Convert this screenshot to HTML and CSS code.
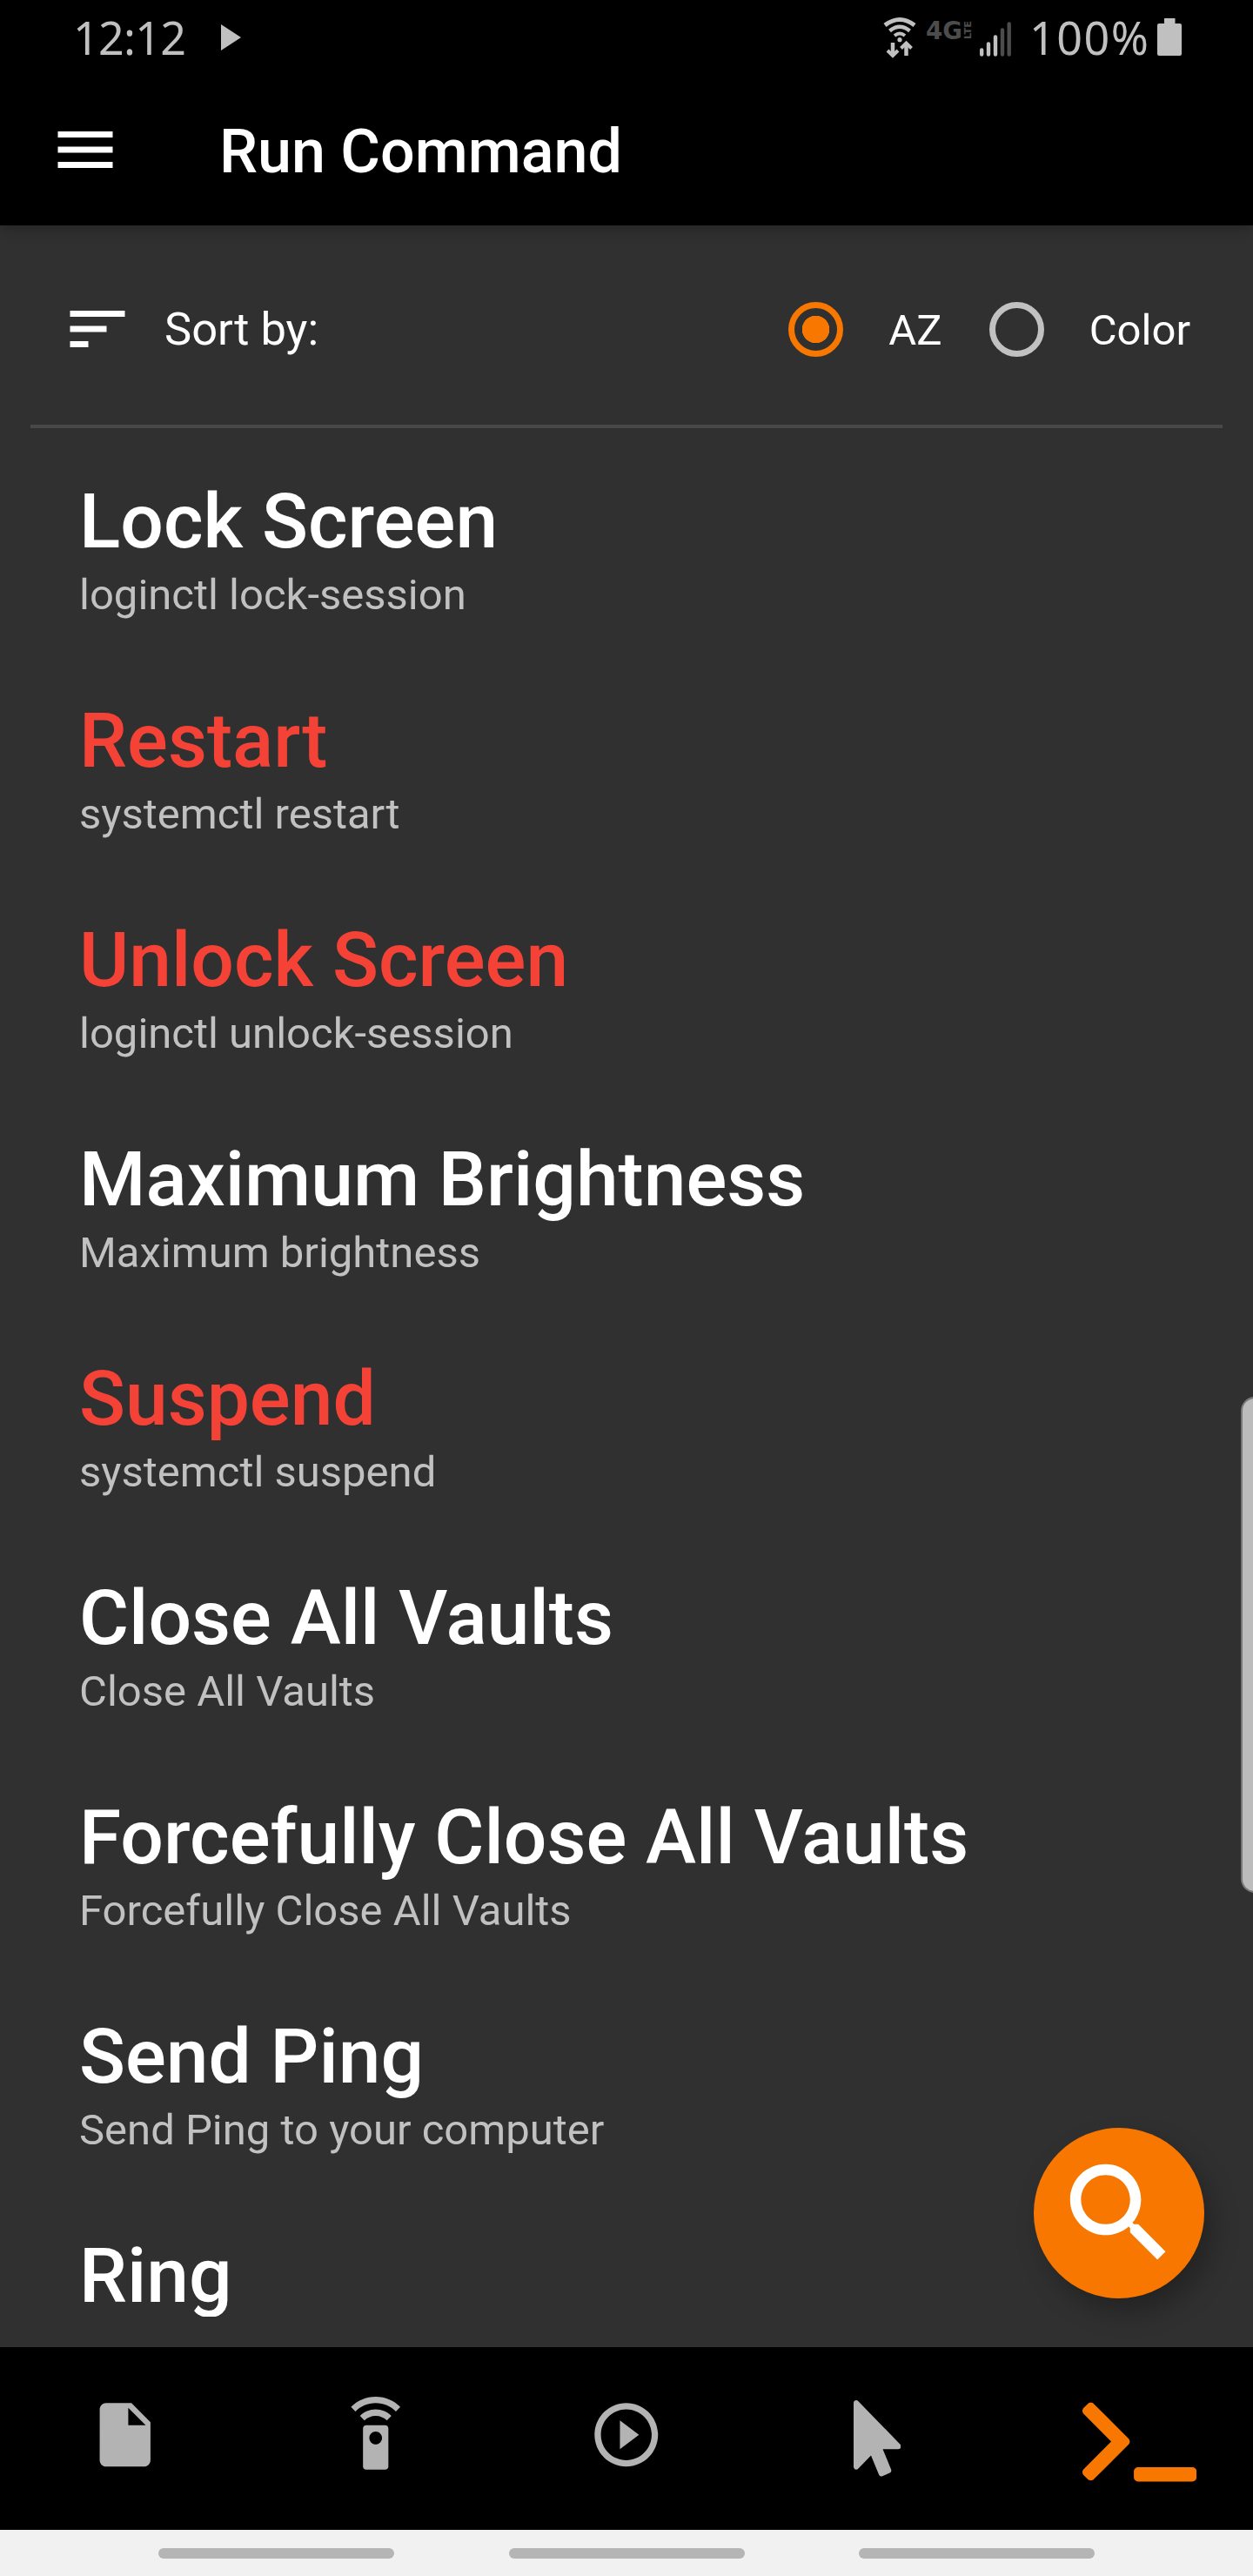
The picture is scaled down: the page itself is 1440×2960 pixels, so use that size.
FILE: index.html
```html
<!DOCTYPE html>
<html lang="en">
<head>
<meta charset="utf-8">
<title>Run Command</title>
<link rel="stylesheet" href="styles.css">
</head>
<body>
<div class="screen">
  <header class="header">
    <div class="status">
      <span class="clock">12:12</span>
      <svg class="status-play" viewBox="0 0 23 30"><path d="M0 0v30L23 15z"/></svg>
      <svg class="status-net" viewBox="1015 15 150 52">
        <g fill="none" stroke="#c0c0c0">
          <path d="M1017 27q17-13 34 0" stroke-width="5"/>
          <path d="M1022.500 33.500q11.500-9.500 23 0" stroke-width="4.500"/>
          <path d="M1028 39q6-5 12 0" stroke-width="4"/>
          <path d="M1026 47v13M1041.500 62V49" stroke-width="4.500"/>
          <path d="M1020 56l6 6 6-6M1035.500 53.500l6-6 6 6" stroke-width="4"/>
        </g>
        <circle cx="1034" cy="43.700" r="2.600" fill="#c0c0c0"/>
        <text class="net-4g" x="1064" y="42.500" textLength="42" lengthAdjust="spacingAndGlyphs">4G</text>
        <text class="net-lte" transform="translate(1116 43) rotate(-90)" textLength="21" lengthAdjust="spacingAndGlyphs">LTE</text>
        <g stroke-width="4.400" stroke-linecap="round">
          <path stroke="#c0c0c0" d="M1128.200 55.500v5M1136 48.500v12M1144 40.500v20"/>
          <path stroke="#4c4c4c" d="M1152 32.500v28M1159.700 25.500v35"/>
        </g>
      </svg>
      <span class="percent">100%</span>
      <svg class="battery" viewBox="0 0 28 43"><path d="M8 0h12.500v6H26a2 2 0 0 1 2 2v33a2 2 0 0 1-2 2H2a2 2 0 0 1-2-2V8a2 2 0 0 1 2-2h6z"/></svg>
    </div>
    <div class="toolbar">
      <svg class="menu" viewBox="0 0 24 24"><path d="M3 18h18v-2H3v2zm0-5h18v-2H3v2zm0-7v2h18V6H3z"/></svg>
      <h1 class="title">Run Command</h1>
    </div>
  </header>

  <main class="content">
    <section class="sort">
      <svg class="sort-icon" viewBox="0 0 24 24"><path d="M3 18h6v-2H3v2zM3 6v2h18V6H3zm0 7h12v-2H3v2z"/></svg>
      <span class="sort-label">Sort by:</span>
      <span class="radio radio-on"></span>
      <span class="radio-label">AZ</span>
      <span class="radio radio-off"></span>
      <span class="radio-label">Color</span>
    </section>
    <ul class="commands">
      <li class="command"><span class="name">Lock Screen</span><span class="detail">loginctl lock-session</span></li>
      <li class="command"><span class="name red">Restart</span><span class="detail">systemctl restart</span></li>
      <li class="command"><span class="name red">Unlock Screen</span><span class="detail">loginctl unlock-session</span></li>
      <li class="command"><span class="name">Maximum Brightness</span><span class="detail">Maximum brightness</span></li>
      <li class="command"><span class="name red">Suspend</span><span class="detail">systemctl suspend</span></li>
      <li class="command"><span class="name">Close All Vaults</span><span class="detail">Close All Vaults</span></li>
      <li class="command"><span class="name">Forcefully Close All Vaults</span><span class="detail">Forcefully Close All Vaults</span></li>
      <li class="command"><span class="name">Send Ping</span><span class="detail">Send Ping to your computer</span></li>
      <li class="command"><span class="name">Ring</span></li>
    </ul>
    <div class="edge-handle"></div>
    <div class="fab"><svg viewBox="0 0 24 24"><path d="M15.500 14h-.79l-.28-.27C15.410 12.590 16 11.110 16 9.500 16 5.910 13.090 3 9.500 3S3 5.910 3 9.500 5.910 16 9.500 16c1.610 0 3.090-.59 4.230-1.570l.27.28v.79l5 4.990L20.490 19l-4.990-5zm-6 0C7.010 14 5 11.990 5 9.500S7.010 5 9.500 5 14 7.010 14 9.500 11.990 14 9.500 14z"/></svg></div>
  </main>

  <nav class="tabs">
    <a class="tab"><svg viewBox="0 0 24 24"><path d="M6 2c-1.100 0-1.990.9-1.990 2L4 20c0 1.100.89 2 1.990 2H18c1.100 0 2-.9 2-2V8l-6-6H6zm7 7V3.500L18.500 9H13z"/></svg></a>
    <a class="tab"><svg viewBox="0 0 24 24"><path d="M15 9H9c-.55 0-1 .45-1 1v12c0 .55.45 1 1 1h6c.55 0 1-.45 1-1V10c0-.55-.45-1-1-1zm-3 6c-1.100 0-2-.9-2-2s.9-2 2-2 2 .9 2 2-.9 2-2 2zM7.050 6.050l1.410 1.410C9.370 6.560 10.620 6 12 6s2.630.56 3.540 1.460l1.410-1.410C15.680 4.780 13.930 4 12 4s-3.680.78-4.950 2.050zM12 0C8.960 0 6.210 1.230 4.220 3.220l1.410 1.410C7.260 3.010 9.510 2 12 2s4.740 1.010 6.360 2.640l1.410-1.410C17.790 1.230 15.040 0 12 0z"/></svg></a>
    <a class="tab"><svg viewBox="0 0 24 24"><path d="M10 16.500l6-4.500-6-4.500v9zM12 2C6.480 2 2 6.480 2 12s4.480 10 10 10 10-4.480 10-10S17.520 2 12 2zm0 18c-4.410 0-8-3.590-8-8s3.590-8 8-8 8 3.590 8 8-3.590 8-8 8z"/></svg></a>
    <a class="tab tab-pointer"><svg viewBox="0 0 320 512"><path d="M302.189 329.126H196.105l55.831 135.993c3.889 9.428-.555 19.999-9.444 23.999l-49.165 21.427c-9.165 4-19.443-.571-23.332-9.714l-53.053-129.136-86.664 89.138C18.729 472.710 0 463.554 0 447.977V18.299C0 1.899 19.921-6.096 30.277 5.443l284.412 292.542c11.472 11.179 3.007 31.141-12.500 31.141z"/></svg></a>
    <a class="tab tab-active"><svg viewBox="0 0 640 512"><path d="M257.981 272.971L63.638 467.314c-9.373 9.373-24.569 9.373-33.941 0L7.029 444.647c-9.357-9.357-9.375-24.522-.04-33.901L161.011 256 6.990 101.255c-9.335-9.379-9.317-24.544.04-33.901l22.667-22.667c9.373-9.373 24.569-9.373 33.941 0L257.981 239.030c9.373 9.372 9.373 24.568 0 33.941zM640 456v-32c0-13.255-10.745-24-24-24H312c-13.255 0-24 10.745-24 24v32c0 13.255 10.745 24 24 24h304c13.255 0 24-10.745 24-24z"/></svg></a>
  </nav>
  <div class="gestures"><span class="pill"></span><span class="pill"></span><span class="pill"></span></div>
</div>
</body>
</html>
```
FILE: styles.css
```css
* { box-sizing: border-box; }
body { margin: 0; }

.screen {
  width: 1440px;
  height: 2960px;
  display: flex;
  flex-direction: column;
  overflow: hidden;
  background: #303030;
  color: #fff;
  font-family: Roboto, sans-serif;
}

.header {
  height: 259px;
  flex: none;
  background: #000;
  box-shadow: 0 4px 14px rgba(0, 0, 0, 0.25);
  position: relative;
  z-index: 1;
}

.status {
  height: 85px;
  padding: 0 82px 0 84px;
  display: flex;
  align-items: center;
  color: #c0c0c0;
  fill: #c0c0c0;
  font: 52px/85px "Noto Sans", sans-serif;
}
.clock { width: 170px; letter-spacing: -0.7px; }
.status-play { width: 23px; height: 30px; }
.status-net { width: 150px; height: 52px; margin: 0 18px 0 auto; }
.net-4g { font: bold 29px "DejaVu Sans", sans-serif; fill: #4c4c4c; }
.net-lte { font: bold 11px "DejaVu Sans", sans-serif; fill: #4c4c4c; }
.percent { width: 147px; letter-spacing: 1.500px; }
.battery { width: 28px; height: 43px; }

.toolbar {
  height: 174px;
  padding-left: 56px;
  display: flex;
  align-items: center;
}
.menu { width: 84px; height: 84px; fill: #fff; }
.title {
  margin: 4px 0 0 112px;
  font-size: 70px;
  font-weight: 500;
  line-height: 82px;
}

.content {
  flex: 1;
  min-height: 0;
  overflow: hidden;
  position: relative;
}
.sort {
  height: 233px;
  margin: 0 35px;
  padding: 9px 37px 0 35px;
  border-bottom: 4px solid #484848;
  display: flex;
  align-items: center;
}
.sort-icon { width: 84px; height: 84px; fill: #fff; }
.sort-label { margin-left: 35px; font-size: 52.5px; }
.radio {
  width: 63px;
  height: 63px;
  border-radius: 50%;
  border: 7px solid #c1c1c1;
  margin-right: 52px;
}
.radio-label { font-size: 49px; padding-top: 2px; }
.radio-on {
  margin-left: auto;
  border-color: #f77700;
  background: radial-gradient(circle, #f77700 15.500px, transparent 16px);
}
.radio-off { margin-left: 54px; }

.commands {
  height: 2170px;
  list-style: none;
  margin: 0;
  padding: 56px 91px 0;
  overflow: hidden;
}
.command { height: 252px; display: flex; flex-direction: column; gap: 5px; }
.name { font-size: 87.500px; font-weight: 500; line-height: 102px; white-space: nowrap; }
.red { color: #f44336; }
.detail { font-size: 49px; line-height: 58px; color: #c1c1c1; }

.edge-handle {
  position: absolute;
  right: -4px;
  top: 1346px;
  width: 18px;
  height: 570px;
  border: 2px solid #777;
  border-radius: 16px 0 0 16px;
  background: #bcbcbc;
}
.fab {
  position: absolute;
  right: 56px;
  bottom: 56px;
  width: 196px;
  height: 196px;
  border-radius: 50%;
  background: #f77700;
  box-shadow: 10px 16px 30px rgba(0, 0, 0, 0.27);
  display: flex;
  align-items: center;
  justify-content: center;
}
.fab svg { width: 150.500px; height: 150.500px; fill: #fff; }

.tabs {
  height: 210px;
  flex: none;
  background: #000;
  display: grid;
  grid-template-columns: repeat(5, 288px);
  fill: #b3b3b3;
}
.tab { display: flex; justify-content: center; padding-top: 57px; }
.tab svg { width: 87.500px; height: 87.500px; }
.tab-pointer { padding-top: 61px; }
.tab-pointer svg { width: 54.700px; }
.tab-active { justify-content: flex-start; padding: 55.500px 0 0 91.500px; fill: #f77700; }
.tab-active svg { width: 131.250px; height: 105px; flex: none; }

.gestures {
  height: 53px;
  flex: none;
  background: #f1f1f1;
  display: flex;
  justify-content: center;
  gap: 131.500px;
  padding-top: 21px;
}
.pill { width: 271px; height: 12px; border-radius: 6px; background: #b5b5b5; }
```
